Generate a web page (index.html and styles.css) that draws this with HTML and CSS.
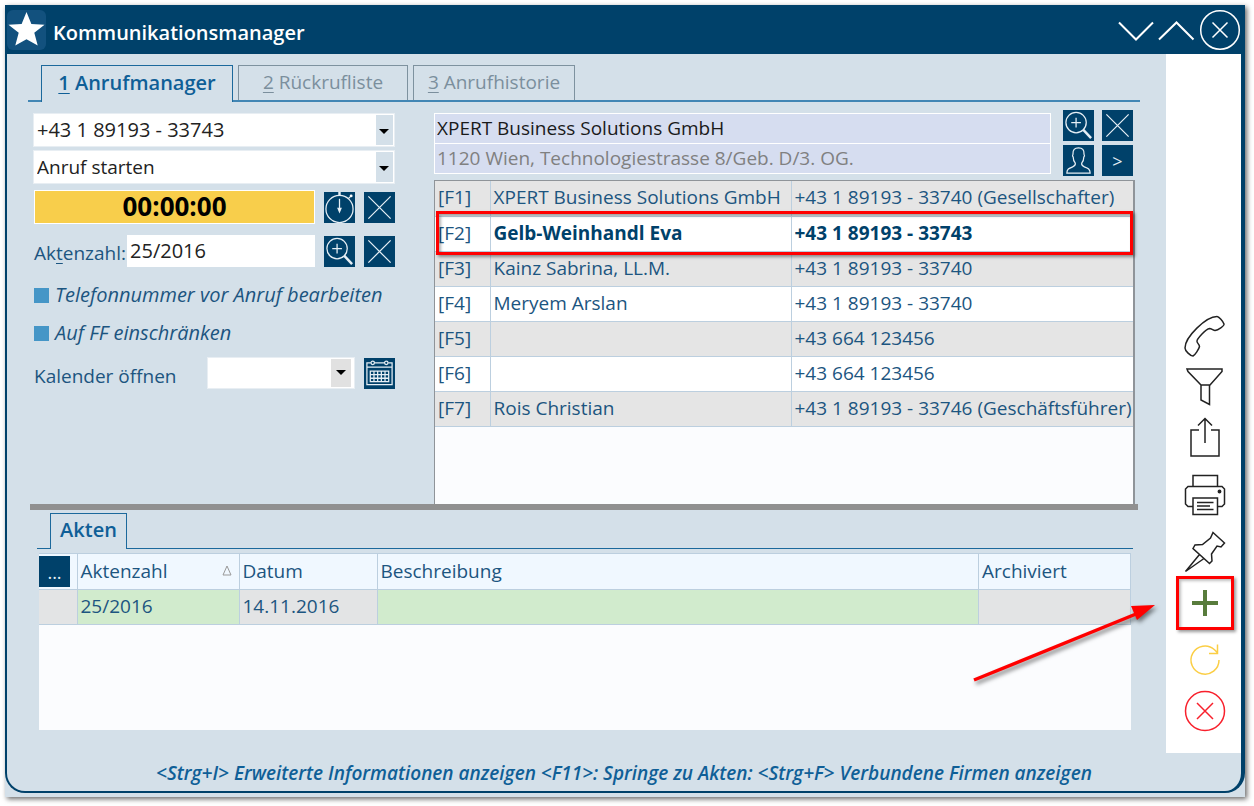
FILE: index.html
```html
<!DOCTYPE html>
<html lang="de">
<head>
<meta charset="utf-8">
<title>Kommunikationsmanager</title>
<link rel="stylesheet" href="styles.css">
</head>
<body>
<svg class="defs" aria-hidden="true">
  <symbol id="x" viewBox="0 0 32 32"><path d="M4.500 4.500 27.500 27.500M27.500 4.500 4.500 27.500"/></symbol>
  <symbol id="search" viewBox="0 0 32 32"><circle cx="13.500" cy="13" r="10.500"/><path d="M13.500 8v10M8.500 13h10"/><path stroke-width="2.500" d="M21 20.500 29 29"/></symbol>
</svg>
<div class="desktop">
<div class="window">
  <header class="titlebar">
    <span class="logo"><svg viewBox="0 0 40 40"><path fill="#fff" stroke="none" d="M20 2 25 14.300 38.500 15 28 23.300 31.500 36.500 20 30 8.500 36.500 12 23.300 1.500 15 15 14.300z"/></svg></span>
    <h1>Kommunikationsmanager</h1>
    <div class="controls">
      <button aria-label="Minimieren"><svg width="37" height="42" viewBox="0 0 37 42"><path stroke-width="2" d="M2 13.500 19 30.500 36 13.500"/></svg></button>
      <button aria-label="Maximieren"><svg width="37" height="42" viewBox="0 0 37 42"><path stroke-width="2" d="M1 30.500 18.500 13.500 35.500 30.500"/></svg></button>
      <button aria-label="Schließen"><svg width="42" height="42" viewBox="0 0 42 42"><circle cx="21" cy="21" r="19.300"/><path d="M13.500 13.500l15 15M28.500 13.500l-15 15"/></svg></button>
    </div>
  </header>

  <main class="main">
    <nav class="tabs" aria-label="Ansicht">
      <button class="tab tab-active tab-first"><u>1</u> Anrufmanager</button>
      <button class="tab tab-second"><u>2</u> Rückrufliste</button>
      <button class="tab tab-third"><u>3</u> Anrufhistorie</button>
    </nav>

    <section class="upper">
      <form class="call">
        <span class="combo combo-number"><select aria-label="Telefonnummer"><option>+43 1 89193 - 33743</option></select></span>
        <span class="combo"><select aria-label="Aktion"><option>Anruf starten</option></select></span>
        <div class="line timer-line">
          <output class="timer">00:00:00</output>
          <button type="button" class="tool" aria-label="Stoppuhr"><svg viewBox="0 0 32 32"><circle cx="16" cy="17.500" r="14"/><path stroke-width="2.500" d="M16 0v4"/><path d="M16 7v11"/><path fill="#fff" d="M14.500 17h3L16 20.500z"/><circle cx="28" cy="4" r="1.500" fill="#fff" stroke="none"/><path d="M25 7l2-2"/></svg></button>
          <button type="button" class="tool" aria-label="Verwerfen"><svg><use href="#x"/></svg></button>
        </div>
        <div class="line file-line">
          <label for="akte">Ak<u>t</u>enzahl:</label>
          <input id="akte" class="field" value="25/2016">
          <button type="button" class="tool" aria-label="Akte suchen"><svg><use href="#search"/></svg></button>
          <button type="button" class="tool" aria-label="Akte leeren"><svg><use href="#x"/></svg></button>
        </div>
        <label class="check"><input type="checkbox">Telefonnummer vor Anruf bearbeiten</label>
        <label class="check"><input type="checkbox">Auf FF einschränken</label>
        <div class="line calendar-line">
          <label for="kalender">Kalender öffnen</label>
          <span class="combo combo-small"><select id="kalender"><option></option></select></span>
          <button type="button" class="tool" aria-label="Kalender"><svg viewBox="0 0 32 32"><path d="M7 5H3v22.500h26V5h-4M11 5h10M3 9.500h26"/><circle cx="9" cy="5" r="1.800"/><circle cx="23" cy="5" r="1.800"/><path d="M6.500 13.500h19v11h-19zM6.500 17.200h19M6.500 20.900h19M10.300 13.500v11M14.100 13.500v11M17.900 13.500v11M21.700 13.500v11"/></svg></button>
        </div>
      </form>

      <div class="contacts">
        <div class="company">
          <div class="company-fields">
            <input aria-label="Firma" value="XPERT Business Solutions GmbH">
            <input class="muted" aria-label="Adresse" value="1120 Wien, Technologiestrasse 8/Geb. D/3. OG.">
          </div>
          <div class="company-tools">
            <button class="tool" aria-label="Firma suchen"><svg><use href="#search"/></svg></button>
            <button class="tool" aria-label="Firma leeren"><svg><use href="#x"/></svg></button>
            <button class="tool" aria-label="Person"><svg viewBox="0 0 32 32"><path d="M4 29h24c0-4-2-5-6-6.500-2-.8-3.200-1.500-2.700-3.700 1.700-2 2.200-3.600 2.200-6.300 1-.8.500-2.500.2-3C22 5 20 3 16 3s-6 2-5.700 6.500c-.3.500-.8 2.200.2 3 0 2.700.5 4.300 2.200 6.300.5 2.200-.7 2.900-2.700 3.700C6 24 4 25 4 29z"/></svg></button>
            <button class="tool">&gt;</button>
          </div>
        </div>
        <div class="list">
          <table class="numbers">
            <colgroup><col class="c-key"><col class="c-name"><col></colgroup>
            <tbody>
            <tr><td>[F1]</td><td>XPERT Business Solutions GmbH</td><td>+43 1 89193 - 33740 (Gesellschafter)</td></tr>
            <tr class="selected"><td>[F2]</td><td>Gelb-Weinhandl Eva</td><td>+43 1 89193 - 33743</td></tr>
            <tr><td>[F3]</td><td>Kainz Sabrina, LL.M.</td><td>+43 1 89193 - 33740</td></tr>
            <tr><td>[F4]</td><td>Meryem Arslan</td><td>+43 1 89193 - 33740</td></tr>
            <tr><td>[F5]</td><td></td><td>+43 664 123456</td></tr>
            <tr><td>[F6]</td><td></td><td>+43 664 123456</td></tr>
            <tr><td>[F7]</td><td>Rois Christian</td><td>+43 1 89193 - 33746 (Geschäftsführer)</td></tr>
            </tbody>
          </table>
          <div class="marker"></div>
        </div>
      </div>
    </section>

    <div class="splitter"></div>

    <section class="lower">
      <div class="tabs tabs-files"><button class="tab tab-active">Akten</button></div>
      <div class="files">
        <table>
          <colgroup><col class="f-menu"><col class="f-number"><col class="f-date"><col><col class="f-archive"></colgroup>
          <thead><tr><th class="menu-cell"><button class="tool">...</button></th><th><span class="sortable">Aktenzahl <svg width="10" height="11" viewBox="0 0 10 11"><path d="M5 1 9 10H1z"/></svg></span></th><th>Datum</th><th>Beschreibung</th><th>Archiviert</th></tr></thead>
          <tbody><tr><td></td><td class="green">25/2016</td><td>14.11.2016</td><td class="green"></td><td></td></tr></tbody>
        </table>
      </div>
    </section>
    <svg class="arrow" width="190" height="92" viewBox="0 0 190 92"><path d="M4 80 166 14" stroke="#f00" stroke-width="3.500"/><path d="M161 6 185 5 167 20z" fill="#f00" stroke="none"/></svg>
  </main>

  <aside class="sidebar">
    <button aria-label="Anrufen"><svg viewBox="0 0 42 42"><path d="M1 33C1 22 22 1.500 33 1.500c2 0 6 5 7 7.500.5 2-6 6-9 6.500-1.500 0-3.500-2-5.500-2C22 14 12.500 24 13 26.500c0 1.500 2.500 3 2.500 5C15 34 11 40 9 41 6.500 41 1 36 1 33z"/></svg></button>
    <button aria-label="Filtern"><svg viewBox="0 0 42 42"><path d="M3 3h35v2.500L26 19h-9L4 5.500zM17 19v15l8.500 4.500V19"/></svg></button>
    <button aria-label="Teilen"><svg viewBox="0 0 42 42"><path d="M15 13H7v26h28V13h-8M21 26V1.500M14 8.500l7-7 7 7"/></svg></button>
    <button class="spaced" aria-label="Drucken"><svg viewBox="0 0 42 42"><path d="M9 13V1.500h24.500V13M9 32.500H4L1.500 30V15L4 12.500h34l2.500 2.500v15L38 32.500h-4.500M9 24h24.500v16.500H9zM13 28.500h16.500M13 32h13M13 35.500h16.500"/><circle cx="35.500" cy="17.500" r="1.200" fill="#222"/></svg></button>
    <button class="spaced" aria-label="Anheften"><svg viewBox="0 0 42 42"><path d="M29 1.500 40.500 12 37 16l-4-1-5.500 8 .5 7-2.500 2.500L9 17.500l2-3.500 7.500-.5 8-6.500zM15.500 23.500 1.500 40.500 20 27.500"/></svg></button>
    <button class="add" aria-label="Hinzufügen"><svg viewBox="0 0 42 42"><path d="M21 8v26M8 21h26"/></svg></button>
    <button class="spaced refresh" aria-label="Aktualisieren"><svg viewBox="0 0 42 42"><path d="M35 21a14 14 0 1 1-4.500-10.200l3 3M33.500 5.500v9H25"/></svg></button>
    <button class="cancel" aria-label="Abbrechen"><svg viewBox="0 0 42 42"><circle cx="21" cy="21" r="19.500"/><path d="M13 13l16 16M29 13 13 29"/></svg></button>
  </aside>

  <footer class="hint">&lt;Strg+I&gt; Erweiterte Informationen anzeigen &lt;F11&gt;: Springe zu Akten: &lt;Strg+F&gt; Verbundene Firmen anzeigen</footer>
</div>
</div>
</body>
</html>
```
FILE: styles.css
```css
* { box-sizing: border-box; }
html, body { height: 100%; }
body {
  margin: 0;
  padding: 5px 9px 9px 5px;
  background: #fff;
  color: #1c5580;
  font: 19px/26px "Open Sans", "Noto Sans", sans-serif;
}
button, input, select { font: inherit; color: inherit; margin: 0; border: 0; border-radius: 0; }
button { padding: 0; background: none; cursor: pointer; }
svg { display: block; fill: none; stroke: currentColor; stroke-width: 1.500; }
u { text-underline-offset: 3px; text-decoration-thickness: 1px; }
.defs { position: absolute; width: 0; height: 0; }

.desktop { height: 100%; padding-bottom: 4px; background: #d4e0e9; box-shadow: 2px 2px 5px rgba(0, 0, 0, .6); }
.window {
  height: 100%;
  display: grid;
  grid-template: auto 1fr auto / 1fr 75px;
  border: 2px solid #00416a;
  border-top: 0;
  border-right-width: 4px;
  border-radius: 0 0 20px 20px;
  background: #d4e0e9;
}

.titlebar { grid-column: 1 / -1; display: flex; align-items: center; gap: 7px; height: 49px; background: #00416a; color: #fff; }
.logo { width: 39px; height: 40px; border-radius: 6px; background: #12517e; }
.titlebar h1 { flex: 1; margin: 0; padding-top: 6px; font-size: 20px; font-weight: 600; }
.controls { display: flex; gap: 4px; }

.main { position: relative; display: flex; flex-direction: column; min-width: 0; }
.tabs { display: flex; gap: 5px; margin: 11px 26px 11px 21px; padding-left: 13px; border-bottom: 2px solid #4286b4; }
.tab { height: 35px; padding-bottom: 2px; border: 1px solid #7e929f; border-bottom: 0; color: #7b8f9d; }
.tab-active { height: 37px; margin-bottom: -2px; padding-bottom: 3px; border-color: #1c699c; background: #d4e0e9; color: #0f5f97; font-size: 20px; font-weight: 600; }
.tab-first { width: 192px; }
.tab-second { width: 170px; }
.tab-third { width: 162px; }

.upper { flex: 391 1 0; display: flex; gap: 39px; margin: 0 31px 0 26px; min-height: 0; }
.call { flex: 0 0 362px; min-width: 0; display: flex; flex-direction: column; }
.combo { position: relative; display: flex; height: 34px; margin-bottom: 3px; border: 1px solid #e8eef3; background: #fff; color: #222; }
.combo select { flex: 1; min-width: 0; appearance: none; padding: 0 24px 1px 3px; background: none; }
.combo-number { font-size: 20px; }
.combo::before { content: ""; position: absolute; inset: 1px 1px 1px auto; width: 17px; background: #d4e0e9; pointer-events: none; }
.combo::after { content: ""; position: absolute; top: 15px; right: 5px; border: 5px solid transparent; border-top-color: #000; border-bottom: 0; pointer-events: none; }
.line { display: flex; align-items: center; gap: 9px; padding-left: 1px; }
.tool { flex: none; display: grid; place-items: center; width: 31px; height: 31px; background: #00416a; color: #e6eff5; font-size: 18px; }
.tool svg { width: 31px; height: 31px; stroke-width: 1.300; }
.timer { flex: 1; height: 34px; border: 1px solid #fff; background: #f8ce4b; color: #000; font-size: 26px; font-weight: 700; line-height: 30px; text-align: center; }
.timer-line { margin-top: 3px; }
.file-line { margin-top: 11px; }
.file-line label { margin-right: -8px; padding-top: 4px; }
.field { flex: 1; min-width: 0; height: 32px; padding: 0 3px 2px; background: #fff; color: #222; font-size: 20px; }
.check { display: flex; align-items: center; gap: 6px; height: 26px; margin: 15px 0 0 1px; font-size: 20px; font-style: italic; white-space: nowrap; }
.check + .check { margin-top: 12px; }
.check input { appearance: none; flex: none; width: 15px; height: 15px; background: #4596c7; }
.calendar-line { margin-top: 11px; }
.calendar-line label { flex: 1; padding-top: 6px; }
.combo-small { width: 148px; height: 32px; margin: 0; }
.combo-small::before { right: 3px; width: 20px; background: #e1e1e1; }
.combo-small::after { top: 12px; right: 8px; }

.contacts { flex: 1; min-width: 0; display: flex; flex-direction: column; }
.company { display: flex; align-items: flex-start; gap: 12px; margin-top: -3px; padding-right: 2px; }
.company-fields { flex: 1; display: flex; flex-direction: column; margin-top: 3px; }
.company-fields input { height: 31px; padding: 0 2px 2px; border: 1px solid #fff; background: #d6ddf0; color: #1a1a1a; }
.company-fields input + input { height: 30px; border-top: 0; }
.company-fields .muted { color: #808080; }
.company-tools { display: grid; grid-template-columns: 31px 31px; gap: 4px 8px; }
.list { position: relative; flex: 1; margin-top: 4px; border: 1px solid #8f9499; border-width: 1px 2px 0 1px; background: #fbfcfe; }
table { width: 100%; border-collapse: collapse; table-layout: fixed; }
td, th { height: 35px; padding: 0 3px 2px; border: 1px solid #bccfdf; text-align: left; font-weight: 400; white-space: nowrap; line-height: 26px; }
.numbers td:first-child { border-left: 0; }
.numbers td:last-child { border-right: 0; padding-right: 0; }
.numbers tr:first-child td { border-top: 0; }
.numbers tr { background: #fff; }
.numbers tr:nth-child(odd) { background: #e5e5e5; }
.c-key { width: 55px; }
.c-name { width: 301px; }
.numbers .selected td { border-top: 1px dotted #333; border-bottom: 1px dotted #333; }
.selected td + td { color: #00416a; font-weight: 700; }
.marker { position: absolute; top: 30px; left: 1px; right: 0; height: 44px; border: 3px solid #f00; box-shadow: 2px 2px 3px rgba(0, 0, 0, .4), inset 2px 2px 3px rgba(0, 0, 0, .3); pointer-events: none; }

.splitter { height: 6px; margin: 0 28px 0 23px; background: #909090; }
.lower { flex: 220 1 0; display: flex; flex-direction: column; padding-bottom: 23px; }
.tabs-files { margin: 3px 33px 4px 30px; border-bottom: 1px solid #1c699c; }
.tabs-files .tab { width: 77px; height: 36px; margin-bottom: -1px; }
.files { flex: 1; margin: 0 35px 0 32px; background: #fbfcfe; }
.files td { background: #e3e4e5; }
.files th { height: 36px; background: #f0f8ff; }
.files .green { background: #d1ebcd; }
.files tr > :first-child { border-left: 0; }
.files .menu-cell { padding: 0; }
.f-menu { width: 38px; }
.f-number { width: 162px; }
.f-date { width: 138px; }
.f-archive { width: 152px; }
.sortable { display: flex; align-items: center; justify-content: space-between; padding-right: 4px; }
.sortable svg { color: #999; stroke-width: 1; }
.arrow { position: absolute; right: 6px; bottom: 61px; pointer-events: none; filter: drop-shadow(2px 3px 2px rgba(0, 0, 0, .5)); }

.sidebar { display: flex; flex-direction: column; justify-content: flex-end; align-items: center; gap: 1px; padding: 0 0 17px 2px; background: #fff; color: #222; }
.sidebar button { position: relative; display: grid; place-items: center; width: 58px; height: 50px; }
.sidebar svg { width: 42px; height: 42px; }
.sidebar .spaced { margin-top: 6px; }
.sidebar .add { color: #587c3c; }
.add svg { stroke-width: 4; }
.add::after { content: ""; position: absolute; inset: -2px 0; border: 3px solid #f00; box-shadow: 2px 2px 3px rgba(0, 0, 0, .4), inset 2px 2px 3px rgba(0, 0, 0, .25); }
.sidebar .refresh { color: #fbce45; }
.sidebar .cancel { color: #f8202c; }

.hint { grid-column: 1 / -1; height: 38px; padding: 7px 0 0; color: #0f5f97; font-size: 19px; font-style: italic; font-weight: 600; text-align: center; }
```
